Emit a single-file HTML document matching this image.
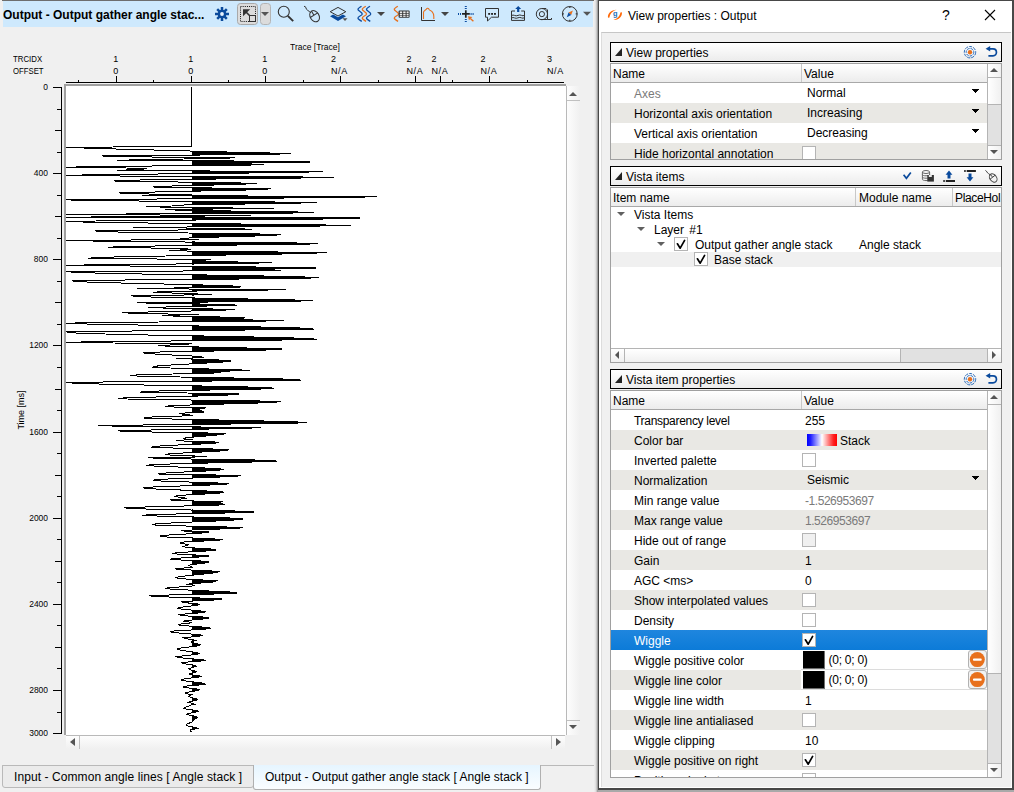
<!DOCTYPE html>
<html><head><meta charset="utf-8"><title>View</title>
<style>
html,body{margin:0;padding:0}
body{width:1014px;height:792px;overflow:hidden;background:#f0f0f0;position:relative;font-family:"Liberation Sans",sans-serif;font-size:12px;color:#000}
.a{position:absolute}
.t{position:absolute;white-space:pre;line-height:14px;height:14px}
.ax{position:absolute;white-space:pre;font-size:9px;line-height:10px;height:10px;color:#000}
.axc{position:absolute;white-space:pre;font-size:9px;line-height:10px;height:10px;width:40px;margin-left:-20px;text-align:center}
.axr{position:absolute;white-space:pre;font-size:9px;line-height:10px;height:10px;width:40px;text-align:right}
.k{position:absolute;background:#000}
/* right panel */
.hdr{position:absolute;left:610px;width:390px;height:18px;border:1px solid #000;background:linear-gradient(#ffffff,#ececec)}
.tbl{position:absolute;left:610px;width:390px;border:1px solid #a0a0a0;background:#fff;overflow:hidden}
.row{position:absolute;left:0;width:376px;height:20px}
.row.g{background:#e9e8e4}
.row.sel{background:linear-gradient(#1f86de,#0c7bd8);color:#fff}
.row .n{position:absolute;left:23px;top:4px;white-space:pre;line-height:14px}
.row .v{position:absolute;left:194px;top:4px;white-space:pre;line-height:14px}
.row .vd{position:absolute;left:196px;top:3px;white-space:pre;line-height:14px}
.gray{color:#7a7a7a}
.v.gray{letter-spacing:-.45px}
.cb{position:absolute;left:191px;top:3px;width:12px;height:12px;border:1px solid #b4b4b4;background:#fff}
.cb.dis{background:#f0f0f0}
.dd{position:absolute;left:361px;top:6px;width:7px;height:4px}
.sb{position:absolute;background:linear-gradient(90deg,#ffffff,#f0f0f0)}
</style></head>
<body>
<div class="a" style="left:2px;top:0;width:596px;height:1px;background:#6e6e6e"></div>
<div class="a" style="left:3px;top:1px;width:590px;height:26px;background:#cee9fd"></div>
<div class="t" style="left:3px;top:8px;font-weight:bold;font-size:12px">Output - Output gather angle stac...</div>
<svg class="a" style="left:0;top:0" width="600" height="30" viewBox="0 0 600 30">
<!-- gear -->
<g transform="translate(222,14)" fill="#0a4a9c">
<g><rect x="-1.25" y="-7" width="2.5" height="14"/><rect x="-7" y="-1.25" width="14" height="2.5"/></g>
<g transform="rotate(45)"><rect x="-1.25" y="-6.8" width="2.5" height="13.6"/><rect x="-6.8" y="-1.25" width="13.6" height="2.5"/></g>
<circle r="4.3"/><circle r="1.9" fill="#e9f4ff"/>
</g>
<!-- select button -->
<rect x="237.5" y="3.5" width="20" height="21" rx="3" fill="#dcdcdc" stroke="#a9a9a9"/>
<rect x="260.5" y="3.5" width="10" height="21" rx="3" fill="#dcdcdc" stroke="#b4b4b4"/>
<rect x="240.5" y="6.5" width="15" height="15" fill="none" stroke="#111" stroke-width="1" stroke-dasharray="1 1.15"/>
<rect x="249.5" y="15.5" width="6" height="6" fill="#dcdcdc" stroke="#333"/>
<path d="M243,9.2 L250.2,9.2 L243,16.2 Z" fill="#333"/>
<path d="M245.5,11.5 L250,16" stroke="#333" stroke-width="1.6" fill="none"/>
<path d="M261,12 L269,12 L265,16 Z" fill="#555"/>
<!-- magnifier -->
<circle cx="283.8" cy="11.8" r="5.5" fill="none" stroke="#333" stroke-width="1.1"/>
<path d="M287.8,15.9 L293.2,21.1" stroke="#333" stroke-width="2" fill="none"/>
<!-- mouse -->
<path d="M304,6.3 C306.5,6 305.5,9.5 307.5,10.2 C309,10.8 309.5,12 311,13" fill="none" stroke="#333" stroke-width="1"/>
<g transform="translate(314.6,16.2) rotate(-32)"><ellipse rx="4.4" ry="6" fill="none" stroke="#333" stroke-width="1"/><path d="M-4.4,-1.2 L4.4,-1.2 M0,-6 L0,-1.2" stroke="#333" stroke-width="1" fill="none"/></g>
<!-- layers -->
<path d="M330.2,11.7 L338,7.4 L345.8,11.7 L338,16 Z" fill="none" stroke="#333" stroke-width="1"/>
<path d="M330,16.2 L333.2,14.6 L338,17.3 L342.8,14.6 L346,16.2 L338,21 Z" fill="#0a4a9c"/>
<path d="M342.5,18.2 L347.5,18.2 L345,21 Z" fill="#555"/>
<!-- 3 waves -->
<g fill="none" stroke-width="1.3">
<path d="M361.5,6.2 C357,9 357,9.5 360,11.5 C363,13.5 363,14.5 360,16 C357,17.8 357,18.5 361.8,21.4" stroke="#0c4da2"/>
<path d="M365.8,6.2 C361.3,9 361.3,9.5 364.3,11.5 C367.3,13.5 367.3,14.5 364.3,16 C361.3,17.8 361.3,18.5 366.1,21.4" stroke="#e8701c"/>
<path d="M370,6.2 C365.5,9 365.5,9.5 368.5,11.5 C371.5,13.5 371.5,14.5 368.5,16 C365.5,17.8 365.5,18.5 370.3,21.4" stroke="#0c4da2"/>
</g>
<path d="M377,12 L385,12 L381,16 Z" fill="#444"/>
<!-- wave + table -->
<path d="M397.8,6.2 C393.3,9 393.3,9.5 396.3,11.5 C399.3,13.5 399.3,14.5 396.3,16 C393.3,17.8 393.3,18.5 398.1,21.4" stroke="#e8701c" stroke-width="1.3" fill="none"/>
<rect x="398.6" y="10.4" width="11" height="7.4" rx="1" fill="#333"/>
<g fill="#fff"><rect x="399.8" y="11.5" width="2.4" height="1.4"/><rect x="403.2" y="11.5" width="2.4" height="1.4"/><rect x="406.6" y="11.5" width="2" height="1.4"/>
<rect x="399.8" y="13.7" width="2.4" height="1.2"/><rect x="403.2" y="13.7" width="2.4" height="1.2"/><rect x="406.6" y="13.7" width="2" height="1.2"/>
<rect x="399.8" y="15.6" width="2.4" height="1.2"/><rect x="403.2" y="15.6" width="2.4" height="1.2"/><rect x="406.6" y="15.6" width="2" height="1.2"/></g>
<!-- histogram -->
<path d="M421.5,7 L421.5,20.5 L435,20.5" fill="none" stroke="#333" stroke-width="1"/>
<path d="M423.5,18.9 L423.5,12.2 C423.6,10.6 425.6,10.2 426.3,9.1 C427,7.9 428.7,7.8 429.1,9.6 C429.4,10.4 431.2,10.6 432.2,11.8 C433.4,13.2 433.8,14.4 433.8,16.2 L433.8,18.9" fill="none" stroke="#e8701c" stroke-width="1.1"/>
<path d="M441,12 L449,12 L445,16 Z" fill="#444"/>
<!-- crosshair -->
<path d="M465.8,6 L465.8,10 M465.8,19 L465.8,22 M458,13.9 L462,13.9 M470.6,13.9 L474,13.9" stroke="#0c4da2" stroke-width="2" stroke-dasharray="1 1" fill="none"/>
<path d="M462,13.9 L469.8,13.9 M465.8,10.2 L465.8,17.7" stroke="#222" stroke-width="1.7" fill="none"/>
<path d="M468,16.2 L472.3,16.9 L468.9,20.3 Z" fill="#e8701c"/>
<path d="M470.4,18.4 L473.4,21.2" stroke="#e8701c" stroke-width="1.4" fill="none"/>
<!-- speech bubble -->
<path d="M485.5,8.5 L498.5,8.5 L498.5,17.2 L491.5,17.2 L487.5,21 L487.5,17.2 L485.5,17.2 Z" fill="none" stroke="#333" stroke-width="1"/>
<rect x="488.2" y="13" width="1.9" height="1.8" fill="#222"/><rect x="491.1" y="13" width="1.9" height="1.8" fill="#222"/><rect x="494" y="13" width="1.9" height="1.8" fill="#222"/>
<!-- export -->
<path d="M515,11 L511.5,11 L511.5,20.4 L524.5,20.4 L524.5,11 L521.2,11" fill="none" stroke="#333" stroke-width="1"/>
<path d="M511.5,15.6 C513.5,13.8 515.5,17 518,15.4 C520.5,13.8 522.5,17 524.5,15.2 M511.5,18 C513.5,16.4 515.5,19.4 518,17.8 C520.5,16.4 522.5,19.4 524.5,17.6" fill="none" stroke="#333" stroke-width="1"/>
<path d="M518.2,6 L521.2,9 L519.3,9 L519.3,12 L517.1,12 L517.1,9 L515.2,9 Z" fill="#0a4a9c"/>
<!-- tape -->
<circle cx="541.9" cy="14.1" r="5.6" fill="none" stroke="#333" stroke-width="1"/>
<circle cx="541.9" cy="14.1" r="2.6" fill="none" stroke="#333" stroke-width="1"/>
<path d="M542,8.5 L546,8.5 L547.5,10 L547.5,19.5 L541,19.5 M547.5,19.5 L551.5,19.5 L551.5,18" fill="none" stroke="#333" stroke-width="1"/>
<!-- compass -->
<circle cx="569.8" cy="13.9" r="7.4" fill="none" stroke="#333" stroke-width="1"/>
<path d="M569.8,6.5 L569.8,8 M569.8,19.8 L569.8,21.3 M562.4,13.9 L563.9,13.9 M575.7,13.9 L577.2,13.9" stroke="#333" stroke-width="1.2" fill="none"/>
<path d="M572.9,10.6 L571.2,15.1 L568.5,12.6 Z" fill="#e8701c"/>
<path d="M566.8,17.2 L571.2,15.1 L568.5,12.6 Z" fill="#0c4da2"/>
<path d="M583,11.8 L591,11.8 L587,15.8 Z" fill="#555"/>
</svg>

<div class="ax" style="left:290px;top:42px;transform:scaleX(.945);transform-origin:0 0">Trace [Trace]</div>
<div class="ax" style="left:13px;top:54px;transform:scaleX(.87);transform-origin:0 0">TRCIDX</div>
<div class="ax" style="left:13px;top:66px;transform:scaleX(.86);transform-origin:0 0">OFFSET</div>
<div class="axc" style="left:115.7px;top:54px">1</div><div class="axc" style="left:115.7px;top:66px">0</div>
<div class="axc" style="left:190.7px;top:54px">1</div><div class="axc" style="left:190.7px;top:66px">0</div>
<div class="axc" style="left:264.7px;top:54px">1</div><div class="axc" style="left:264.7px;top:66px">0</div>
<div class="ax" style="left:331px;top:54px">2</div><div class="ax" style="left:331px;top:66px;letter-spacing:.6px">N/A</div>
<div class="ax" style="left:406.5px;top:54px">2</div><div class="ax" style="left:406.5px;top:66px;letter-spacing:.6px">N/A</div>
<div class="ax" style="left:431.5px;top:54px">2</div><div class="ax" style="left:431.5px;top:66px;letter-spacing:.6px">N/A</div>
<div class="ax" style="left:480.5px;top:54px">2</div><div class="ax" style="left:480.5px;top:66px;letter-spacing:.6px">N/A</div>
<div class="ax" style="left:547px;top:54px">3</div><div class="ax" style="left:547px;top:66px;letter-spacing:.6px">N/A</div>
<div class="k" style="left:66px;top:82px;width:498px;height:1px"></div>
<div class="k" style="left:116px;top:76px;width:1px;height:6px"></div>
<div class="k" style="left:191px;top:76px;width:1px;height:6px"></div>
<div class="k" style="left:265px;top:76px;width:1px;height:6px"></div>
<div class="k" style="left:340px;top:76px;width:1px;height:6px"></div>
<div class="k" style="left:415px;top:76px;width:1px;height:6px"></div>
<div class="k" style="left:440px;top:76px;width:1px;height:6px"></div>
<div class="k" style="left:489px;top:76px;width:1px;height:6px"></div>
<div class="k" style="left:78px;top:80px;width:1px;height:2px"></div>
<div class="k" style="left:153px;top:80px;width:1px;height:2px"></div>
<div class="k" style="left:228px;top:80px;width:1px;height:2px"></div>
<div class="k" style="left:303px;top:80px;width:1px;height:2px"></div>
<div class="k" style="left:378px;top:80px;width:1px;height:2px"></div>
<div class="k" style="left:452px;top:80px;width:1px;height:2px"></div>
<div class="k" style="left:527px;top:80px;width:1px;height:2px"></div>
<div class="k" style="left:61px;top:87px;width:1px;height:647px"></div>
<div class="k" style="left:53px;top:87px;width:8px;height:1px"></div>
<div class="axr" style="left:8px;top:82px;transform:scaleX(.94);transform-origin:100% 0">0</div>
<div class="k" style="left:57px;top:109px;width:4px;height:1px"></div>
<div class="k" style="left:55px;top:130px;width:6px;height:1px"></div>
<div class="k" style="left:57px;top:152px;width:4px;height:1px"></div>
<div class="k" style="left:53px;top:173px;width:8px;height:1px"></div>
<div class="axr" style="left:8px;top:168px;transform:scaleX(.94);transform-origin:100% 0">400</div>
<div class="k" style="left:57px;top:195px;width:4px;height:1px"></div>
<div class="k" style="left:55px;top:216px;width:6px;height:1px"></div>
<div class="k" style="left:57px;top:238px;width:4px;height:1px"></div>
<div class="k" style="left:53px;top:259px;width:8px;height:1px"></div>
<div class="axr" style="left:8px;top:254px;transform:scaleX(.94);transform-origin:100% 0">800</div>
<div class="k" style="left:57px;top:281px;width:4px;height:1px"></div>
<div class="k" style="left:55px;top:302px;width:6px;height:1px"></div>
<div class="k" style="left:57px;top:324px;width:4px;height:1px"></div>
<div class="k" style="left:53px;top:345px;width:8px;height:1px"></div>
<div class="axr" style="left:8px;top:340px;transform:scaleX(.94);transform-origin:100% 0">1200</div>
<div class="k" style="left:57px;top:367px;width:4px;height:1px"></div>
<div class="k" style="left:55px;top:389px;width:6px;height:1px"></div>
<div class="k" style="left:57px;top:410px;width:4px;height:1px"></div>
<div class="k" style="left:53px;top:432px;width:8px;height:1px"></div>
<div class="axr" style="left:8px;top:427px;transform:scaleX(.94);transform-origin:100% 0">1600</div>
<div class="k" style="left:57px;top:453px;width:4px;height:1px"></div>
<div class="k" style="left:55px;top:475px;width:6px;height:1px"></div>
<div class="k" style="left:57px;top:496px;width:4px;height:1px"></div>
<div class="k" style="left:53px;top:518px;width:8px;height:1px"></div>
<div class="axr" style="left:8px;top:513px;transform:scaleX(.94);transform-origin:100% 0">2000</div>
<div class="k" style="left:57px;top:539px;width:4px;height:1px"></div>
<div class="k" style="left:55px;top:561px;width:6px;height:1px"></div>
<div class="k" style="left:57px;top:582px;width:4px;height:1px"></div>
<div class="k" style="left:53px;top:604px;width:8px;height:1px"></div>
<div class="axr" style="left:8px;top:599px;transform:scaleX(.94);transform-origin:100% 0">2400</div>
<div class="k" style="left:57px;top:625px;width:4px;height:1px"></div>
<div class="k" style="left:55px;top:647px;width:6px;height:1px"></div>
<div class="k" style="left:57px;top:668px;width:4px;height:1px"></div>
<div class="k" style="left:53px;top:690px;width:8px;height:1px"></div>
<div class="axr" style="left:8px;top:685px;transform:scaleX(.94);transform-origin:100% 0">2800</div>
<div class="k" style="left:57px;top:712px;width:4px;height:1px"></div>
<div class="k" style="left:53px;top:733px;width:8px;height:1px"></div>
<div class="axr" style="left:8px;top:728px;transform:scaleX(.94);transform-origin:100% 0">3000</div>
<div class="ax" style="left:1px;top:405px;width:40px;text-align:center;transform:rotate(-90deg);transform-origin:50% 50%">Time [ms]</div>
<div class="a" style="left:64px;top:84px;width:502px;height:651px;background:#a0a0a0"></div>
<div class="a" style="left:66px;top:86px;width:500px;height:649px;background:#fff"></div>
<svg class="a" style="left:0;top:0" width="600" height="792" viewBox="0 0 600 792"><g shape-rendering="crispEdges"><path d="M191.5,87.0 L191.5,87.9 L191.5,88.7 L191.5,89.6 L191.5,90.4 L191.5,91.3 L191.5,92.2 L191.5,93.0 L191.5,93.9 L191.5,94.8 L191.5,95.6 L191.5,96.5 L191.5,97.3 L191.5,98.2 L191.5,99.1 L191.5,99.9 L191.5,100.8 L191.5,101.7 L191.5,102.5 L191.5,103.4 L191.5,104.2 L191.5,105.1 L191.5,106.0 L191.5,106.8 L191.5,107.7 L191.5,108.5 L191.5,109.4 L191.5,110.3 L191.5,111.1 L191.5,112.0 L191.5,112.9 L191.5,113.7 L191.5,114.6 L191.5,115.4 L191.5,116.3 L191.5,117.2 L191.5,118.0 L191.5,118.9 L191.5,119.8 L191.5,120.6 L191.5,121.5 L191.5,122.3 L191.5,123.2 L191.5,124.1 L191.5,124.9 L191.5,125.8 L191.5,126.7 L191.5,127.5 L191.5,128.4 L191.5,129.2 L191.5,130.1 L191.5,131.0 L191.5,131.8 L191.5,132.7 L191.5,133.5 L191.5,134.4 L191.5,135.3 L191.5,136.1 L191.5,137.0 L191.5,137.9 L191.5,138.7 L191.5,139.6 L191.5,140.4 L191.5,141.3 L191.5,142.2 L191.5,143.0 L191.5,143.9 L191.5,144.8 L191.5,145.6 L191.5,146.5 L191.5,147.3 L191.5,148.2 L191.5,149.1 L191.5,149.9 L191.5,150.8 L212.8,151.6 L244.0,152.5 L290.5,153.4 L276.7,154.2 L191.5,155.1 L191.5,156.0 L191.5,156.8 L234.5,157.7 L222.0,158.5 L191.5,159.4 L191.5,160.3 L249.9,161.1 L310.5,162.0 L254.6,162.9 L232.5,163.7 L263.5,164.6 L238.3,165.4 L191.5,166.3 L191.5,167.2 L191.5,168.0 L191.5,168.9 L191.5,169.8 L191.5,170.6 L322.5,171.5 L301.6,172.3 L234.1,173.2 L191.5,174.1 L191.5,174.9 L191.5,175.8 L278.0,176.6 L333.5,177.5 L275.6,178.4 L197.9,179.2 L191.5,180.1 L191.5,181.0 L191.5,181.8 L231.4,182.7 L256.5,183.5 L237.9,184.4 L201.9,185.3 L191.5,186.1 L191.5,187.0 L202.8,187.9 L270.5,188.7 L262.2,189.6 L230.9,190.4 L191.5,191.3 L191.5,192.2 L191.5,193.0 L191.5,193.9 L191.5,194.7 L191.5,195.6 L376.5,196.5 L357.9,197.3 L264.2,198.2 L191.5,199.1 L191.5,199.9 L191.5,200.8 L240.7,201.6 L316.5,202.5 L289.8,203.4 L230.9,204.2 L191.5,205.1 L191.5,206.0 L191.5,206.8 L207.2,207.7 L273.5,208.5 L191.5,209.4 L191.5,210.3 L237.7,211.1 L297.9,212.0 L313.5,212.9 L191.5,213.7 L191.5,214.6 L250.5,215.4 L191.5,216.3 L191.5,217.2 L360.5,218.0 L336.8,218.9 L235.4,219.7 L191.5,220.6 L191.5,221.5 L191.5,222.3 L191.5,223.2 L250.2,224.1 L322.1,224.9 L350.5,225.8 L232.1,226.6 L191.5,227.5 L225.7,228.4 L251.5,229.2 L191.5,230.1 L191.5,231.0 L191.5,231.8 L191.5,232.7 L232.3,233.5 L280.5,234.4 L275.7,235.3 L252.3,236.1 L219.3,237.0 L191.5,237.8 L191.5,238.7 L198.5,239.6 L191.5,240.4 L191.5,241.3 L206.0,242.2 L296.6,243.0 L317.5,243.9 L264.2,244.7 L191.5,245.6 L191.5,246.5 L191.5,247.3 L191.5,248.2 L191.5,249.1 L191.5,249.9 L191.5,250.8 L237.8,251.6 L326.5,252.5 L310.6,253.4 L272.8,254.2 L221.0,255.1 L191.5,256.0 L191.5,256.8 L191.5,257.7 L191.5,258.5 L210.5,259.4 L204.5,260.3 L200.5,261.1 L238.1,262.0 L271.5,262.8 L214.9,263.7 L191.5,264.6 L191.5,265.4 L191.5,266.3 L280.7,267.2 L316.5,268.0 L260.5,268.9 L271.5,269.7 L280.5,270.6 L191.5,271.5 L191.5,272.3 L191.5,273.2 L191.5,274.1 L200.3,274.9 L252.9,275.8 L294.3,276.6 L319.2,277.5 L304.9,278.4 L218.0,279.2 L191.5,280.1 L191.5,280.9 L191.5,281.8 L191.5,282.7 L191.5,283.5 L191.5,284.4 L214.2,285.3 L235.6,286.1 L241.1,287.0 L191.5,287.8 L191.5,288.7 L286.1,289.6 L250.0,290.4 L191.5,291.3 L191.5,292.2 L191.5,293.0 L195.9,293.9 L212.1,294.7 L191.5,295.6 L191.5,296.5 L191.5,297.3 L204.4,298.2 L253.1,299.1 L292.9,299.9 L313.3,300.8 L264.1,301.6 L191.5,302.5 L191.5,303.4 L213.7,304.2 L237.2,305.1 L211.4,305.9 L191.5,306.8 L191.5,307.7 L191.5,308.5 L234.8,309.4 L221.2,310.3 L191.5,311.1 L191.5,312.0 L191.5,312.8 L191.5,313.7 L199.3,314.6 L191.5,315.4 L191.5,316.3 L230.4,317.2 L244.7,318.0 L225.5,318.9 L235.8,319.7 L284.1,320.6 L244.1,321.5 L191.5,322.3 L191.5,323.2 L191.5,324.1 L191.5,324.9 L191.5,325.8 L240.6,326.6 L285.5,327.5 L310.7,328.4 L314.1,329.2 L236.7,330.1 L191.5,330.9 L191.5,331.8 L191.5,332.7 L191.5,333.5 L191.5,334.4 L191.5,335.3 L209.2,336.1 L253.6,337.0 L289.4,337.8 L311.6,338.7 L317.3,339.6 L247.3,340.4 L191.5,341.3 L191.5,342.2 L191.5,343.0 L191.5,343.9 L191.5,344.7 L191.5,345.6 L191.5,346.5 L213.4,347.3 L256.4,348.2 L282.1,349.0 L271.3,349.9 L227.1,350.8 L191.5,351.6 L191.5,352.5 L191.5,353.4 L191.5,354.2 L191.5,355.1 L191.5,355.9 L201.8,356.8 L204.2,357.7 L191.5,358.5 L201.9,359.4 L227.1,360.3 L231.3,361.1 L223.5,362.0 L210.8,362.8 L194.6,363.7 L191.5,364.6 L191.5,365.4 L191.5,366.3 L191.5,367.2 L191.5,368.0 L204.3,368.9 L236.9,369.7 L250.2,370.6 L205.5,371.5 L221.0,372.3 L211.5,373.2 L191.5,374.0 L191.5,374.9 L191.5,375.8 L191.5,376.6 L206.2,377.5 L256.1,378.4 L291.8,379.2 L301.3,380.1 L225.1,380.9 L191.5,381.8 L191.5,382.7 L191.5,383.5 L191.5,384.4 L191.5,385.3 L207.6,386.1 L247.8,387.0 L270.9,387.8 L274.3,388.7 L235.6,389.6 L191.5,390.4 L191.5,391.3 L191.5,392.1 L191.5,393.0 L239.1,393.9 L236.1,394.7 L213.9,395.6 L191.5,396.5 L191.5,397.3 L191.5,398.2 L191.5,399.0 L191.5,399.9 L252.1,400.8 L281.2,401.6 L271.9,402.5 L248.1,403.4 L216.8,404.2 L191.5,405.1 L191.5,405.9 L191.5,406.8 L205.6,407.7 L203.8,408.5 L196.5,409.4 L197.4,410.3 L202.2,411.1 L204.2,412.0 L191.5,412.8 L191.5,413.7 L191.5,414.6 L192.5,415.4 L191.5,416.3 L191.5,417.1 L191.5,418.0 L191.5,418.9 L204.5,419.7 L247.3,420.6 L284.0,421.5 L306.8,422.3 L296.1,423.2 L232.5,424.0 L191.5,424.9 L191.5,425.8 L191.5,426.6 L261.0,427.5 L245.3,428.4 L198.0,429.2 L191.5,430.1 L191.5,430.9 L191.5,431.8 L196.5,432.7 L225.9,433.5 L222.9,434.4 L215.1,435.2 L204.4,436.1 L193.8,437.0 L191.5,437.8 L191.5,438.7 L192.5,439.6 L191.5,440.4 L191.5,441.3 L219.0,442.1 L216.1,443.0 L203.3,443.9 L191.5,444.7 L191.5,445.6 L191.5,446.5 L191.5,447.3 L191.5,448.2 L213.1,449.0 L228.9,449.9 L223.8,450.8 L210.0,451.6 L192.2,452.5 L191.5,453.4 L191.5,454.2 L191.5,455.1 L193.2,455.9 L207.2,456.8 L191.5,457.7 L191.5,458.5 L215.1,459.4 L268.0,460.2 L276.8,461.1 L252.7,462.0 L216.6,462.8 L191.5,463.7 L191.5,464.6 L191.5,465.4 L191.5,466.3 L191.5,467.1 L204.5,468.0 L220.9,468.9 L224.0,469.7 L213.6,470.6 L196.4,471.5 L191.5,472.3 L191.5,473.2 L191.5,474.0 L212.3,474.9 L241.1,475.8 L229.7,476.6 L208.7,477.5 L191.5,478.3 L191.5,479.2 L191.5,480.1 L191.5,480.9 L191.5,481.8 L210.6,482.7 L228.9,483.5 L224.7,484.4 L205.2,485.2 L191.5,486.1 L191.5,487.0 L191.5,487.8 L191.5,488.7 L191.5,489.6 L192.5,490.4 L213.7,491.3 L224.0,492.1 L220.3,493.0 L207.4,493.9 L191.5,494.7 L191.5,495.6 L191.5,496.5 L191.5,497.3 L191.5,498.2 L191.5,499.0 L191.5,499.9 L191.5,500.8 L223.0,501.6 L217.7,502.5 L215.5,503.3 L224.9,504.2 L218.4,505.1 L191.5,505.9 L191.5,506.8 L191.5,507.7 L191.5,508.5 L191.5,509.4 L201.3,510.2 L238.6,511.1 L254.1,512.0 L235.4,512.8 L191.5,513.7 L191.5,514.6 L191.5,515.4 L191.5,516.3 L198.2,517.1 L229.7,518.0 L243.1,518.9 L238.7,519.7 L225.5,520.6 L206.4,521.4 L191.5,522.3 L191.5,523.2 L191.5,524.0 L191.5,524.9 L191.5,525.8 L214.1,526.6 L242.7,527.5 L237.8,528.3 L214.7,529.2 L191.5,530.1 L191.5,530.9 L209.3,531.8 L206.4,532.7 L195.0,533.5 L191.5,534.4 L191.5,535.2 L191.5,536.1 L191.5,537.0 L191.5,537.8 L210.7,538.7 L222.8,539.6 L216.7,540.4 L198.4,541.3 L191.5,542.1 L191.5,543.0 L191.5,543.9 L191.5,544.7 L191.5,545.6 L191.5,546.4 L191.5,547.3 L197.5,548.2 L211.3,549.0 L216.4,549.9 L209.4,550.8 L194.7,551.6 L191.5,552.5 L191.5,553.3 L191.5,554.2 L197.8,555.1 L209.3,555.9 L202.9,556.8 L191.5,557.7 L191.5,558.5 L191.5,559.4 L191.5,560.2 L202.3,561.1 L209.3,562.0 L206.3,562.8 L199.6,563.7 L192.5,564.5 L191.5,565.4 L191.5,566.3 L192.5,567.1 L191.5,568.0 L191.5,568.9 L191.5,569.7 L205.8,570.6 L218.9,571.4 L217.2,572.3 L212.1,573.2 L204.3,574.0 L195.3,574.9 L191.5,575.8 L191.5,576.6 L191.5,577.5 L191.5,578.3 L191.5,579.2 L204.5,580.1 L216.4,580.9 L214.8,581.8 L205.3,582.7 L193.1,583.5 L191.5,584.4 L195.4,585.2 L191.5,586.1 L191.5,587.0 L191.5,587.8 L191.5,588.7 L191.5,589.5 L195.8,590.4 L215.9,591.3 L231.3,592.1 L237.1,593.0 L219.4,593.9 L191.5,594.7 L191.5,595.6 L191.5,596.4 L191.5,597.3 L205.9,598.2 L222.3,599.0 L216.0,599.9 L196.9,600.8 L191.5,601.6 L191.5,602.5 L191.6,603.3 L199.1,604.2 L197.9,605.1 L192.2,605.9 L191.5,606.8 L191.5,607.6 L191.5,608.5 L191.5,609.4 L193.1,610.2 L201.8,611.1 L205.5,612.0 L200.5,612.8 L191.5,613.7 L191.5,614.5 L191.5,615.4 L191.8,616.3 L204.6,617.1 L209.3,618.0 L204.5,618.9 L194.8,619.7 L191.5,620.6 L191.5,621.4 L192.0,622.3 L191.5,623.2 L191.5,624.0 L191.5,624.9 L191.5,625.8 L197.2,626.6 L207.4,627.5 L211.3,628.3 L204.5,629.2 L191.5,630.1 L191.5,630.9 L191.5,631.8 L191.5,632.6 L191.5,633.5 L195.8,634.4 L202.4,635.2 L200.1,636.1 L191.5,637.0 L191.5,637.8 L191.5,638.7 L191.5,639.5 L195.4,640.4 L192.9,641.3 L191.5,642.1 L193.8,643.0 L197.3,643.9 L200.1,644.7 L199.3,645.6 L194.0,646.4 L191.5,647.3 L191.5,648.2 L191.5,649.0 L191.5,649.9 L191.5,650.7 L191.5,651.6 L196.4,652.5 L199.1,653.3 L197.2,654.2 L191.5,655.1 L191.5,655.9 L191.5,656.8 L191.5,657.6 L191.5,658.5 L199.6,659.4 L205.5,660.2 L200.0,661.1 L191.5,662.0 L191.5,662.8 L191.5,663.7 L191.5,664.5 L194.8,665.4 L195.7,666.3 L193.5,667.1 L191.5,668.0 L191.5,668.8 L191.5,669.7 L193.1,670.6 L196.4,671.4 L195.7,672.3 L192.1,673.2 L191.5,674.0 L191.5,674.9 L199.6,675.7 L201.3,676.6 L195.8,677.5 L191.5,678.3 L191.5,679.2 L191.5,680.1 L191.5,680.9 L192.0,681.8 L199.2,682.6 L204.3,683.5 L205.4,684.4 L196.4,685.2 L191.5,686.1 L191.5,687.0 L191.5,687.8 L195.1,688.7 L199.5,689.5 L198.1,690.4 L193.4,691.3 L191.5,692.1 L191.5,693.0 L191.5,693.8 L191.5,694.7 L191.5,695.6 L191.5,696.4 L191.5,697.3 L193.8,698.2 L196.7,699.0 L197.5,699.9 L194.5,700.7 L191.5,701.6 L191.5,702.5 L192.7,703.3 L194.8,704.2 L191.5,705.1 L191.5,705.9 L191.5,706.8 L191.5,707.6 L191.5,708.5 L191.5,709.4 L195.0,710.2 L198.6,711.1 L196.8,711.9 L191.9,712.8 L191.5,713.7 L191.5,714.5 L191.5,715.4 L195.4,716.3 L197.5,717.1 L197.0,718.0 L195.6,718.8 L194.1,719.7 L193.0,720.6 L192.8,721.4 L191.5,722.3 L191.5,723.2 L191.5,724.0 L191.5,724.9 L191.5,725.7 L191.5,726.6 L194.9,727.5 L197.5,728.3 L194.2,729.2 L191.5,730.1 L191.5,730.9 L191.5,731.8 Z" fill="#000" stroke="none"/><path d="M191.5,87.0 L191.5,87.9 L191.5,88.7 L191.5,89.6 L191.5,90.4 L191.5,91.3 L191.5,92.2 L191.5,93.0 L191.5,93.9 L191.5,94.8 L191.5,95.6 L191.5,96.5 L191.5,97.3 L191.5,98.2 L191.5,99.1 L191.5,99.9 L191.5,100.8 L191.5,101.7 L191.5,102.5 L191.5,103.4 L191.5,104.2 L191.5,105.1 L191.5,106.0 L191.5,106.8 L191.5,107.7 L191.5,108.5 L191.5,109.4 L191.5,110.3 L191.5,111.1 L191.5,112.0 L191.5,112.9 L191.5,113.7 L191.5,114.6 L191.5,115.4 L191.5,116.3 L191.5,117.2 L191.5,118.0 L191.5,118.9 L191.5,119.8 L191.5,120.6 L191.5,121.5 L191.5,122.3 L191.5,123.2 L191.5,124.1 L191.5,124.9 L191.5,125.8 L191.5,126.7 L191.5,127.5 L191.5,128.4 L191.5,129.2 L191.5,130.1 L191.5,131.0 L191.5,131.8 L191.5,132.7 L191.5,133.5 L191.5,134.4 L191.5,135.3 L191.5,136.1 L191.5,137.0 L191.5,137.9 L191.5,138.7 L191.5,139.6 L191.5,140.4 L191.5,141.3 L191.5,142.2 L191.5,143.0 L191.5,143.9 L191.5,144.8 L191.5,145.6 L191.5,146.5 L66.5,147.3 L88.2,148.2 L119.4,149.1 L150.5,149.9 L181.7,150.8 L212.8,151.6 L244.0,152.5 L290.5,153.4 L276.7,154.2 L190.8,155.1 L102.5,156.0 L128.0,156.8 L234.5,157.7 L222.0,158.5 L154.0,159.4 L117.5,160.3 L249.9,161.1 L310.5,162.0 L254.6,162.9 L232.5,163.7 L263.5,164.6 L238.3,165.4 L110.6,166.3 L66.5,167.2 L126.2,168.0 L146.5,168.9 L128.6,169.8 L117.5,170.6 L322.5,171.5 L301.6,172.3 L234.1,173.2 L149.1,174.1 L84.1,174.9 L66.5,175.8 L278.0,176.6 L333.5,177.5 L275.6,178.4 L197.9,179.2 L133.5,180.1 L114.5,181.0 L161.9,181.8 L231.4,182.7 L256.5,183.5 L237.9,184.4 L201.9,185.3 L167.6,186.1 L153.5,187.0 L202.8,187.9 L270.5,188.7 L262.2,189.6 L230.9,190.4 L187.0,191.3 L145.9,192.2 L119.5,193.0 L141.8,193.9 L191.5,194.7 L142.5,195.6 L376.5,196.5 L357.9,197.3 L264.2,198.2 L144.8,199.1 L66.5,199.9 L104.2,200.8 L240.7,201.6 L316.5,202.5 L289.8,203.4 L230.9,204.2 L178.5,205.1 L171.7,206.0 L146.5,206.8 L207.2,207.7 L273.5,208.5 L165.5,209.4 L179.0,210.3 L237.7,211.1 L297.9,212.0 L313.5,212.9 L156.9,213.7 L66.5,214.6 L250.5,215.4 L182.3,216.3 L66.5,217.2 L360.5,218.0 L336.8,218.9 L235.4,219.7 L119.1,220.6 L66.5,221.5 L92.1,222.3 L162.3,223.2 L250.2,224.1 L322.1,224.9 L350.5,225.8 L232.1,226.6 L132.5,227.5 L225.7,228.4 L251.5,229.2 L169.4,230.1 L95.5,231.0 L105.8,231.8 L160.9,232.7 L232.3,233.5 L280.5,234.4 L275.7,235.3 L252.3,236.1 L219.3,237.0 L191.2,237.8 L180.5,238.7 L198.5,239.6 L66.5,240.4 L105.4,241.3 L206.0,242.2 L296.6,243.0 L317.5,243.9 L264.2,244.7 L183.7,245.6 L120.8,246.5 L108.5,247.3 L161.8,248.2 L190.5,249.1 L181.3,249.9 L169.5,250.8 L237.8,251.6 L326.5,252.5 L310.6,253.4 L272.8,254.2 L221.0,255.1 L166.3,256.0 L120.5,256.8 L93.3,257.7 L88.5,258.5 L210.5,259.4 L204.5,260.3 L200.5,261.1 L238.1,262.0 L271.5,262.8 L214.9,263.7 L102.0,264.6 L66.5,265.4 L161.0,266.3 L280.7,267.2 L316.5,268.0 L260.5,268.9 L271.5,269.7 L280.5,270.6 L66.5,271.5 L72.9,272.3 L100.9,273.2 L146.2,274.1 L200.3,274.9 L252.9,275.8 L294.3,276.6 L319.2,277.5 L304.9,278.4 L218.0,279.2 L114.0,280.1 L71.9,280.9 L81.7,281.8 L106.9,282.7 L142.4,283.5 L180.8,284.4 L214.2,285.3 L235.6,286.1 L241.1,287.0 L185.3,287.8 L137.0,288.7 L286.1,289.6 L250.0,290.4 L171.1,291.3 L152.9,292.2 L171.7,293.0 L195.9,293.9 L212.1,294.7 L130.8,295.6 L134.7,296.5 L160.8,297.3 L204.4,298.2 L253.1,299.1 L292.9,299.9 L313.3,300.8 L264.1,301.6 L137.0,302.5 L153.7,303.4 L213.7,304.2 L237.2,305.1 L211.4,305.9 L171.2,306.8 L147.9,307.7 L185.7,308.5 L234.8,309.4 L221.2,310.3 L186.7,311.1 L148.1,312.0 L121.8,312.8 L151.1,313.7 L199.3,314.6 L162.2,315.4 L178.8,316.3 L230.4,317.2 L244.7,318.0 L225.5,318.9 L235.8,319.7 L284.1,320.6 L244.1,321.5 L107.8,322.3 L66.5,323.2 L89.0,324.1 L131.0,324.9 L185.3,325.8 L240.6,326.6 L285.5,327.5 L310.7,328.4 L314.1,329.2 L236.7,330.1 L140.7,330.9 L66.5,331.8 L69.1,332.7 L87.1,333.5 L119.7,334.4 L162.4,335.3 L209.2,336.1 L253.6,337.0 L289.4,337.8 L311.6,338.7 L317.3,339.6 L247.3,340.4 L134.4,341.3 L66.5,342.2 L113.5,343.0 L191.5,343.9 L176.8,344.7 L158.0,345.6 L173.9,346.5 L213.4,347.3 L256.4,348.2 L282.1,349.0 L271.3,349.9 L227.1,350.8 L174.0,351.6 L142.9,352.5 L145.8,353.4 L157.4,354.2 L174.2,355.1 L190.8,355.9 L201.8,356.8 L204.2,357.7 L176.5,358.5 L201.9,359.4 L227.1,360.3 L231.3,361.1 L223.5,362.0 L210.8,362.8 L194.6,363.7 L177.9,364.6 L163.7,365.4 L154.6,366.3 L152.1,367.2 L170.0,368.0 L204.3,368.9 L236.9,369.7 L250.2,370.6 L205.5,371.5 L221.0,372.3 L211.5,373.2 L173.0,374.0 L136.5,374.9 L129.7,375.8 L159.5,376.6 L206.2,377.5 L256.1,378.4 L291.8,379.2 L301.3,380.1 L225.1,380.9 L113.4,381.8 L66.5,382.7 L79.8,383.5 L113.1,384.4 L159.1,385.3 L207.6,386.1 L247.8,387.0 L270.9,387.8 L274.3,388.7 L235.6,389.6 L184.9,390.4 L146.8,391.3 L139.8,392.1 L187.0,393.0 L239.1,393.9 L236.1,394.7 L213.9,395.6 L178.2,396.5 L142.6,397.3 L118.0,398.2 L126.7,399.0 L183.1,399.9 L252.1,400.8 L281.2,401.6 L271.9,402.5 L248.1,403.4 L216.8,404.2 L187.3,405.1 L168.4,405.9 L164.7,406.8 L205.6,407.7 L203.8,408.5 L196.5,409.4 L197.4,410.3 L202.2,411.1 L204.2,412.0 L186.3,412.8 L179.5,413.7 L187.1,414.6 L192.5,415.4 L177.6,416.3 L149.1,417.1 L143.7,418.0 L167.4,418.9 L204.5,419.7 L247.3,420.6 L284.0,421.5 L306.8,422.3 L296.1,423.2 L232.5,424.0 L149.7,424.9 L97.8,425.8 L152.4,426.6 L261.0,427.5 L245.3,428.4 L198.0,429.2 L145.8,430.1 L117.6,430.9 L138.8,431.8 L196.5,432.7 L225.9,433.5 L222.9,434.4 L215.1,435.2 L204.4,436.1 L193.8,437.0 L186.1,437.8 L183.2,438.7 L192.5,439.6 L176.5,440.4 L187.7,441.3 L219.0,442.1 L216.1,443.0 L203.3,443.9 L184.2,444.7 L165.4,445.6 L153.1,446.5 L150.8,447.3 L178.5,448.2 L213.1,449.0 L228.9,449.9 L223.8,450.8 L210.0,451.6 L192.2,452.5 L175.9,453.4 L165.5,454.2 L170.1,455.1 L193.2,455.9 L207.2,456.8 L148.4,457.7 L159.9,458.5 L215.1,459.4 L268.0,460.2 L276.8,461.1 L252.7,462.0 L216.6,462.8 L178.7,463.7 L152.2,464.6 L145.7,465.4 L157.8,466.3 L180.2,467.1 L204.5,468.0 L220.9,468.9 L224.0,469.7 L213.6,470.6 L196.4,471.5 L177.3,472.3 L162.7,473.2 L157.6,474.0 L212.3,474.9 L241.1,475.8 L229.7,476.6 L208.7,477.5 L184.1,478.3 L163.4,479.2 L152.6,480.1 L158.6,480.9 L182.1,481.8 L210.6,482.7 L228.9,483.5 L224.7,484.4 L205.2,485.2 L177.5,486.1 L153.4,487.0 L142.9,487.8 L149.2,488.7 L168.0,489.6 L192.5,490.4 L213.7,491.3 L224.0,492.1 L220.3,493.0 L207.4,493.9 L190.7,494.7 L177.7,495.6 L173.9,496.5 L180.3,497.3 L186.5,498.2 L181.5,499.0 L169.7,499.9 L184.5,500.8 L223.0,501.6 L217.7,502.5 L215.5,503.3 L224.9,504.2 L218.4,505.1 L188.7,505.9 L150.8,506.8 L124.0,507.7 L129.3,508.5 L158.6,509.4 L201.3,510.2 L238.6,511.1 L254.1,512.0 L235.4,512.8 L190.0,513.7 L150.1,514.6 L141.7,515.4 L163.8,516.3 L198.2,517.1 L229.7,518.0 L243.1,518.9 L238.7,519.7 L225.5,520.6 L206.4,521.4 L185.5,522.3 L167.2,523.2 L155.5,524.0 L152.6,524.9 L176.1,525.8 L214.1,526.6 L242.7,527.5 L237.8,528.3 L214.7,529.2 L189.4,530.1 L180.7,530.9 L209.3,531.8 L206.4,532.7 L195.0,533.5 L179.4,534.4 L165.8,535.2 L159.7,536.1 L166.8,537.0 L187.7,537.8 L210.7,538.7 L222.8,539.6 L216.7,540.4 L198.4,541.3 L182.4,542.1 L179.7,543.0 L184.9,543.9 L188.1,544.7 L186.4,545.6 L183.1,546.4 L185.4,547.3 L197.5,548.2 L211.3,549.0 L216.4,549.9 L209.4,550.8 L194.7,551.6 L179.7,552.5 L171.8,553.3 L178.7,554.2 L197.8,555.1 L209.3,555.9 L202.9,556.8 L186.4,557.7 L172.2,558.5 L169.7,559.4 L185.0,560.2 L202.3,561.1 L209.3,562.0 L206.3,562.8 L199.6,563.7 L192.5,564.5 L188.7,565.4 L190.5,566.3 L192.5,567.1 L183.7,568.0 L174.7,568.9 L183.1,569.7 L205.8,570.6 L218.9,571.4 L217.2,572.3 L212.1,573.2 L204.3,574.0 L195.3,574.9 L186.6,575.8 L179.9,576.6 L175.7,577.5 L177.4,578.3 L188.7,579.2 L204.5,580.1 L216.4,580.9 L214.8,581.8 L205.3,582.7 L193.1,583.5 L185.6,584.4 L195.4,585.2 L191.4,586.1 L179.0,587.0 L167.9,587.8 L166.0,588.7 L177.6,589.5 L195.8,590.4 L215.9,591.3 L231.3,592.1 L237.1,593.0 L219.4,593.9 L180.3,594.7 L148.8,595.6 L153.6,596.4 L177.0,597.3 L205.9,598.2 L222.3,599.0 L216.0,599.9 L196.9,600.8 L181.1,601.6 L183.2,602.5 L191.6,603.3 L199.1,604.2 L197.9,605.1 L192.2,605.9 L184.5,606.8 L178.9,607.6 L177.7,608.5 L183.7,609.4 L193.1,610.2 L201.8,611.1 L205.5,612.0 L200.5,612.8 L188.7,613.7 L178.6,614.5 L180.7,615.4 L191.8,616.3 L204.6,617.1 L209.3,618.0 L204.5,618.9 L194.8,619.7 L185.9,620.6 L183.1,621.4 L192.0,622.3 L189.5,623.2 L181.1,624.0 L178.6,624.9 L185.8,625.8 L197.2,626.6 L207.4,627.5 L211.3,628.3 L204.5,629.2 L189.3,630.1 L174.8,630.9 L169.7,631.8 L174.5,632.6 L184.8,633.5 L195.8,634.4 L202.4,635.2 L200.1,636.1 L191.4,637.0 L183.9,637.8 L185.4,638.7 L191.0,639.5 L195.4,640.4 L192.9,641.3 L191.2,642.1 L193.8,643.0 L197.3,643.9 L200.1,644.7 L199.3,645.6 L194.0,646.4 L186.2,647.3 L179.4,648.2 L176.9,649.0 L179.0,649.9 L184.2,650.7 L190.8,651.6 L196.4,652.5 L199.1,653.3 L197.2,654.2 L190.7,655.1 L182.8,655.9 L176.9,656.8 L178.3,657.6 L187.7,658.5 L199.6,659.4 L205.5,660.2 L200.0,661.1 L187.7,662.0 L181.5,662.8 L184.1,663.7 L190.0,664.5 L194.8,665.4 L195.7,666.3 L193.5,667.1 L190.7,668.0 L188.8,668.8 L189.7,669.7 L193.1,670.6 L196.4,671.4 L195.7,672.3 L192.1,673.2 L188.8,674.0 L191.5,674.9 L199.6,675.7 L201.3,676.6 L195.8,677.5 L188.6,678.3 L182.9,679.2 L181.5,680.1 L185.3,680.9 L192.0,681.8 L199.2,682.6 L204.3,683.5 L205.4,684.4 L196.4,685.2 L185.6,686.1 L182.6,687.0 L187.7,687.8 L195.1,688.7 L199.5,689.5 L198.1,690.4 L193.4,691.3 L188.0,692.1 L184.8,693.0 L187.2,693.8 L191.5,694.7 L190.1,695.6 L188.8,696.4 L190.5,697.3 L193.8,698.2 L196.7,699.0 L197.5,699.9 L194.5,700.7 L190.1,701.6 L188.3,702.5 L192.7,703.3 L194.8,704.2 L190.7,705.1 L189.5,705.9 L187.0,706.8 L184.3,707.6 L183.7,708.5 L188.6,709.4 L195.0,710.2 L198.6,711.1 L196.8,711.9 L191.9,712.8 L187.5,713.7 L186.6,714.5 L190.6,715.4 L195.4,716.3 L197.5,717.1 L197.0,718.0 L195.6,718.8 L194.1,719.7 L193.0,720.6 L192.8,721.4 L191.3,722.3 L189.0,723.2 L186.9,724.0 L185.9,724.9 L187.1,725.7 L190.7,726.6 L194.9,727.5 L197.5,728.3 L194.2,729.2 L189.9,730.1 L190.5,730.9 L191.5,731.8" fill="none" stroke="#000" stroke-width="1"/></g></svg>
<div class="a" style="left:566px;top:86px;width:14px;height:649px;background:linear-gradient(90deg,#fdfdfd,#f0f0f0);border-left:1px solid #b9b9b9;box-sizing:border-box"></div>
<div class="a" style="left:567px;top:100px;width:13px;height:1px;background:#c0c0c0"></div>
<div class="a" style="left:567px;top:720px;width:13px;height:1px;background:#c0c0c0"></div>
<div class="a" style="left:569px;top:92px;width:0;height:0;border-left:4px solid transparent;border-right:4px solid transparent;border-bottom:4px solid #555"></div>
<div class="a" style="left:569px;top:725px;width:0;height:0;border-left:4px solid transparent;border-right:4px solid transparent;border-top:4px solid #555"></div>
<div class="a" style="left:66px;top:735px;width:499px;height:14px;background:linear-gradient(#fdfdfd,#f0f0f0);border-top:1px solid #b9b9b9;box-sizing:border-box"></div>
<div class="a" style="left:79px;top:736px;width:1px;height:13px;background:#c0c0c0"></div>
<div class="a" style="left:551px;top:736px;width:1px;height:13px;background:#c0c0c0"></div>
<div class="a" style="left:70px;top:738px;width:0;height:0;border-top:4.5px solid transparent;border-bottom:4.5px solid transparent;border-right:5px solid #555"></div>
<div class="a" style="left:556px;top:738px;width:0;height:0;border-top:4.5px solid transparent;border-bottom:4.5px solid transparent;border-left:5px solid #555"></div>
<div class="a" style="left:2px;top:765px;width:592px;height:1px;background:#b9b9b9"></div>
<div class="a" style="left:2px;top:765px;width:252px;height:23px;background:#ebebeb;border:1px solid #b9b9b9;border-radius:0 0 3px 3px;box-sizing:border-box"></div>
<div class="a" style="left:253px;top:765px;width:288px;height:25px;background:linear-gradient(#e6f5ff,#fafdff);border:1px solid #b0b0b0;border-top:none;border-radius:0 0 3px 3px;box-sizing:border-box"></div>
<div class="t" style="left:14px;top:770px;letter-spacing:.08px">Input - Common angle lines [ Angle stack ]</div>
<div class="t" style="left:265px;top:770px;letter-spacing:.03px">Output - Output gather angle stack [ Angle stack ]</div>
<div class="a" style="left:594px;top:0;width:4px;height:792px;background:linear-gradient(90deg,#f0f0f0,#dcdcdc 50%,#8c8c8c)"></div>
<div class="a" style="left:598px;top:0;width:416px;height:790px;background:#484848"></div>
<div class="a" style="left:598px;top:790px;width:416px;height:2px;background:#a9a9a9"></div>
<div class="a" style="left:599px;top:1px;width:413px;height:787px;background:#fff"></div>
<div class="a" style="left:601px;top:32px;width:410px;height:755px;background:#f0f0f0;border-top:1px solid #c6c6c6;border-left:1px solid #dcdcdc;box-sizing:border-box"></div>
<svg class="a" style="left:604px;top:6px" width="22" height="18" viewBox="604 6 22 18">
<path d="M608,17.8 C607.4,13.6 611,10 616.6,9.8 C612.9,10.9 610,13.6 609.5,17.4 Z" fill="#ff6a0a"/>
<path d="M621.9,12.2 C622.5,16.3 618.9,19.9 613.3,20.1 C617,19 619.9,16.3 620.4,12.6 Z" fill="#ff6a0a"/>
<text x="612.9" y="16.4" font-family="Liberation Sans" font-weight="bold" font-size="7.4" fill="#1a6db5">g</text>
</svg>
<div class="t" style="left:628px;top:9px">View properties : Output</div>
<div class="t" style="left:942px;top:7px;font-size:14px;line-height:16px;height:16px">?</div>
<svg class="a" style="left:984px;top:9px" width="12" height="12" viewBox="0 0 12 12"><path d="M1,1 L11,11 M11,1 L1,11" stroke="#000" stroke-width="1.1" fill="none"/></svg>
<div class="hdr" style="top:42px"><svg class="a" style="left:4px;top:5px" width="7" height="8" viewBox="0 0 7 8"><path d="M0,8 L7,8 L7,0 Z" fill="#222"/></svg><div class="t" style="left:15px;top:3px">View properties</div><svg class="a" style="left:351px;top:2px" width="16" height="16" viewBox="0 0 16 16">
<circle cx="8" cy="7.2" r="5.7" fill="none" stroke="#2a6ab8" stroke-width="1" stroke-dasharray="3.2 1"/>
<circle cx="8" cy="7.2" r="3.8" fill="#eef5ff" stroke="#2a6ab8" stroke-width="1" stroke-dasharray="2.6 1"/>
<circle cx="8" cy="7.2" r="2.2" fill="#e8701c"/></svg><svg class="a" style="left:372px;top:0px" width="16" height="16" viewBox="0 0 16 16">
<path d="M2.6,5.8 L7.2,3 L7.2,8.6 Z" fill="#0a4a9c"/>
<path d="M6.5,5.8 L10,5.8 C14.6,5.8 14.6,12.8 10,12.8 L5.4,12.8" fill="none" stroke="#0a4a9c" stroke-width="1.7"/></svg></div>
<div class="tbl" style="top:63px;height:95px"><div class="a" style="left:0;top:0;width:376px;height:18px;background:linear-gradient(#ffffff,#ececec);border-bottom:1px solid #a8a8a8"></div><div class="t" style="left:2px;top:3px">Name</div><div class="a" style="left:190px;top:0;width:1px;height:18px;background:#c8c8c8"></div><div class="t" style="left:193px;top:3px">Value</div><div class="row" style="top:19px"><div class="n gray">Axes</div><div class="vd">Normal</div><svg class="dd" width="7" height="4" viewBox="0 0 7 4" shape-rendering="crispEdges"><path d="M0,0 L7,0 L3.5,4 Z" fill="#000"/></svg></div><div class="row g" style="top:39px"><div class="n">Horizontal axis orientation</div><div class="vd">Increasing</div><svg class="dd" width="7" height="4" viewBox="0 0 7 4" shape-rendering="crispEdges"><path d="M0,0 L7,0 L3.5,4 Z" fill="#000"/></svg></div><div class="row" style="top:59px"><div class="n">Vertical axis orientation</div><div class="vd">Decreasing</div><svg class="dd" width="7" height="4" viewBox="0 0 7 4" shape-rendering="crispEdges"><path d="M0,0 L7,0 L3.5,4 Z" fill="#000"/></svg></div><div class="row g" style="top:79px"><div class="n">Hide horizontal annotation</div><div class="cb"></div></div><div class="a" style="left:376px;top:0px;width:14px;height:95px;background:linear-gradient(90deg,#ffffff,#f0f0f0);border-left:1px solid #b4b4b4;box-sizing:border-box"></div><div class="a" style="left:377px;top:40px;width:13px;height:42px;background:#e1e1e1;border-top:1px solid #b4b4b4;border-bottom:1px solid #b4b4b4;box-sizing:border-box"></div><div class="a" style="left:377px;top:13px;width:13px;height:1px;background:#b4b4b4"></div><div class="a" style="left:377px;top:81px;width:13px;height:1px;background:#b4b4b4"></div><div class="a" style="left:379px;top:4px;width:0;height:0;border-left:4px solid transparent;border-right:4px solid transparent;border-bottom:4px solid #555"></div><div class="a" style="left:379px;top:86px;width:0;height:0;border-left:4px solid transparent;border-right:4px solid transparent;border-top:4px solid #555"></div></div>
<div class="hdr" style="top:166px"><svg class="a" style="left:4px;top:5px" width="7" height="8" viewBox="0 0 7 8"><path d="M0,8 L7,8 L7,0 Z" fill="#222"/></svg><div class="t" style="left:15px;top:3px">Vista items</div><svg class="a" style="left:285px;top:0" width="104" height="18" viewBox="896 167 104 18">
<path d="M903.6,174.8 L906.4,178.3 L910.8,172.6" fill="none" stroke="#0a4a9c" stroke-width="1.7"/>
<g fill="none" stroke="#666" stroke-width="1"><ellipse cx="926" cy="172" rx="3.6" ry="1.5"/><path d="M922.4,172 L922.4,179.3 C922.4,181 929.6,181 929.6,179.3 L929.6,172 M922.4,174.6 C922.4,176.2 929.6,176.2 929.6,174.6 M922.4,177 C922.4,178.6 929.6,178.6 929.6,177"/></g>
<rect x="927.3" y="175" width="6.6" height="6.6" fill="#333"/><rect x="928.8" y="175" width="3" height="2" fill="#e8e8e8"/>
<path d="M949,170.6 L952.4,174.8 L950.5,174.8 L950.5,178.4 L947.5,178.4 L947.5,174.8 L945.6,174.8 Z" fill="#0a4a9c"/>
<rect x="943.3" y="180" width="1.5" height="2" fill="#222"/><rect x="945.8" y="180" width="9.2" height="2" fill="#222"/>
<rect x="964.2" y="170" width="1.5" height="2" fill="#222"/><rect x="966.7" y="170" width="9.2" height="2" fill="#222"/>
<path d="M970,181.6 L973.4,177.3 L971.5,177.3 L971.5,173.4 L968.5,173.4 L968.5,177.3 L966.6,177.3 Z" fill="#0a4a9c"/>
<path d="M985.4,170.4 C987,171 987,173 988.5,173.6 L990.5,175" fill="none" stroke="#444" stroke-width="1"/>
<g transform="translate(993.2,178) rotate(-38)"><ellipse rx="3.3" ry="4.6" fill="none" stroke="#444" stroke-width="1"/><path d="M-3.3,-1 L3.3,-1 M0,-4.6 L0,-1" stroke="#444" stroke-width="0.9" fill="none"/></g>
</svg></div>
<div class="tbl" style="top:187px;height:174px"><div class="a" style="left:0;top:0;width:390px;height:18px;background:linear-gradient(#ffffff,#ececec);border-bottom:1px solid #a8a8a8"></div><div class="t" style="left:2px;top:3px">Item name</div><div class="a" style="left:244px;top:0;width:1px;height:18px;background:#c8c8c8"></div><div class="t" style="left:248px;top:3px">Module name</div><div class="a" style="left:341px;top:0;width:1px;height:18px;background:#c8c8c8"></div><div class="t" style="left:344px;top:3px;letter-spacing:-.35px">PlaceHol</div><div class="a" style="left:0;top:64px;width:390px;height:15px;background:#f0f0f0"></div><div class="a" style="left:6px;top:24px;width:0;height:0;border-left:4px solid transparent;border-right:4px solid transparent;border-top:4px solid #606060"></div><div class="t" style="left:23px;top:20px">Vista Items</div><div class="a" style="left:26px;top:39px;width:0;height:0;border-left:4px solid transparent;border-right:4px solid transparent;border-top:4px solid #606060"></div><div class="t" style="left:43px;top:35px">Layer <span style="margin-left:2px">#1</span></div><div class="a" style="left:46px;top:54px;width:0;height:0;border-left:4px solid transparent;border-right:4px solid transparent;border-top:4px solid #606060"></div><div class="cb" style="left:63px;top:49px;width:12px;height:12px"><svg class="a" style="left:1px;top:1px" width="11" height="11" viewBox="0 0 11 11"><path d="M1.4,4.8 L4.2,9.2 L8.6,1.4" stroke="#000" stroke-width="1.7" stroke-linecap="round" stroke-linejoin="round" fill="none"/></svg></div><div class="t" style="left:84px;top:50px">Output gather angle stack</div><div class="t" style="left:248px;top:50px">Angle stack</div><div class="cb" style="left:83px;top:64px;width:12px;height:12px"><svg class="a" style="left:1px;top:1px" width="11" height="11" viewBox="0 0 11 11"><path d="M1.4,4.8 L4.2,9.2 L8.6,1.4" stroke="#000" stroke-width="1.7" stroke-linecap="round" stroke-linejoin="round" fill="none"/></svg></div><div class="t" style="left:103px;top:65px">Base stack</div><div class="a" style="left:0;top:160px;width:390px;height:14px;background:linear-gradient(#ffffff,#f0f0f0);border-top:1px solid #b4b4b4;box-sizing:border-box"></div><div class="a" style="left:13px;top:161px;width:1px;height:13px;background:#b4b4b4"></div><div class="a" style="left:376px;top:161px;width:1px;height:13px;background:#b4b4b4"></div><div class="a" style="left:289px;top:161px;width:87px;height:13px;background:#e1e1e1;border-left:1px solid #b4b4b4;box-sizing:border-box"></div><div class="a" style="left:4px;top:163px;width:0;height:0;border-top:4px solid transparent;border-bottom:4px solid transparent;border-right:4px solid #555"></div><div class="a" style="left:381px;top:163px;width:0;height:0;border-top:4px solid transparent;border-bottom:4px solid transparent;border-left:4px solid #555"></div></div>
<div class="hdr" style="top:369px"><svg class="a" style="left:4px;top:5px" width="7" height="8" viewBox="0 0 7 8"><path d="M0,8 L7,8 L7,0 Z" fill="#222"/></svg><div class="t" style="left:15px;top:3px">Vista item properties</div><svg class="a" style="left:351px;top:2px" width="16" height="16" viewBox="0 0 16 16">
<circle cx="8" cy="7.2" r="5.7" fill="none" stroke="#2a6ab8" stroke-width="1" stroke-dasharray="3.2 1"/>
<circle cx="8" cy="7.2" r="3.8" fill="#eef5ff" stroke="#2a6ab8" stroke-width="1" stroke-dasharray="2.6 1"/>
<circle cx="8" cy="7.2" r="2.2" fill="#e8701c"/></svg><svg class="a" style="left:372px;top:0px" width="16" height="16" viewBox="0 0 16 16">
<path d="M2.6,5.8 L7.2,3 L7.2,8.6 Z" fill="#0a4a9c"/>
<path d="M6.5,5.8 L10,5.8 C14.6,5.8 14.6,12.8 10,12.8 L5.4,12.8" fill="none" stroke="#0a4a9c" stroke-width="1.7"/></svg></div>
<div class="tbl" style="top:390px;height:386px"><div class="a" style="left:0;top:0;width:376px;height:18px;background:linear-gradient(#ffffff,#ececec);border-bottom:1px solid #a8a8a8"></div><div class="t" style="left:2px;top:3px">Name</div><div class="a" style="left:190px;top:0;width:1px;height:18px;background:#c8c8c8"></div><div class="t" style="left:193px;top:3px">Value</div><div class="row" style="top:19px"><div class="n"><span style="letter-spacing:-.3px">Transparency level</span></div><div class="v">255</div></div><div class="row g" style="top:39px"><div class="n">Color bar</div><div class="a" style="left:196px;top:4px;width:30px;height:12px;background:linear-gradient(90deg,#0000ff 0%,#2020ff 12%,#ffffff 50%,#ff2020 88%,#ff0000 100%)"></div><div class="a" style="left:229px;top:4px;line-height:14px">Stack</div></div><div class="row" style="top:59px"><div class="n">Inverted palette</div><div class="cb"></div></div><div class="row g" style="top:79px"><div class="n">Normalization</div><div class="vd">Seismic</div><svg class="dd" width="7" height="4" viewBox="0 0 7 4" shape-rendering="crispEdges"><path d="M0,0 L7,0 L3.5,4 Z" fill="#000"/></svg></div><div class="row" style="top:99px"><div class="n">Min range value</div><div class="v gray">-1.526953697</div></div><div class="row g" style="top:119px"><div class="n">Max range value</div><div class="v gray">1.526953697</div></div><div class="row" style="top:139px"><div class="n">Hide out of range</div><div class="cb dis"></div></div><div class="row g" style="top:159px"><div class="n">Gain</div><div class="v">1</div></div><div class="row" style="top:179px"><div class="n">AGC &lt;ms&gt;</div><div class="v">0</div></div><div class="row g" style="top:199px"><div class="n">Show interpolated values</div><div class="cb"></div></div><div class="row" style="top:219px"><div class="n">Density</div><div class="cb"></div></div><div class="row g sel" style="top:239px"><div class="n">Wiggle</div><div class="cb"><svg class="a" style="left:1px;top:1px" width="11" height="11" viewBox="0 0 11 11"><path d="M1.4,4.8 L4.2,9.2 L8.6,1.4" stroke="#000" stroke-width="1.7" stroke-linecap="round" stroke-linejoin="round" fill="none"/></svg></div></div><div class="row" style="top:259px"><div class="n">Wiggle positive color</div><div class="a" style="left:190px;top:0;width:186px;height:20px;background:#fff;border-bottom:1px solid #dcdcdc;box-sizing:border-box"></div><div class="a" style="left:191.5px;top:1px;width:21px;height:17px;background:#000;border-right:1px solid #6e6e6e;border-bottom:1px solid #6e6e6e"></div><div class="a" style="left:217.5px;top:3px;line-height:14px;white-space:pre;letter-spacing:-.25px">(0; 0; 0)</div><div class="a" style="left:357px;top:0;width:19px;height:19px;border:1px solid #b2b2b2;border-radius:3px;background:#f2f2f2;box-sizing:border-box"></div><svg class="a" style="left:358px;top:1px" width="17" height="17" viewBox="0 0 17 17"><circle cx="8.3" cy="8.6" r="7.5" fill="#e8701c"/><rect x="4" y="7.5" width="8.7" height="2.2" rx="0.8" fill="#fff"/></svg></div><div class="row g" style="top:279px"><div class="n">Wiggle line color</div><div class="a" style="left:190px;top:0;width:186px;height:20px;background:#fff;border-bottom:1px solid #dcdcdc;box-sizing:border-box"></div><div class="a" style="left:191.5px;top:1px;width:21px;height:17px;background:#000;border-right:1px solid #6e6e6e;border-bottom:1px solid #6e6e6e"></div><div class="a" style="left:217.5px;top:3px;line-height:14px;white-space:pre;letter-spacing:-.25px">(0; 0; 0)</div><div class="a" style="left:357px;top:0;width:19px;height:19px;border:1px solid #b2b2b2;border-radius:3px;background:#f2f2f2;box-sizing:border-box"></div><svg class="a" style="left:358px;top:1px" width="17" height="17" viewBox="0 0 17 17"><circle cx="8.3" cy="8.6" r="7.5" fill="#e8701c"/><rect x="4" y="7.5" width="8.7" height="2.2" rx="0.8" fill="#fff"/></svg></div><div class="row" style="top:299px"><div class="n">Wiggle line width</div><div class="v">1</div></div><div class="row g" style="top:319px"><div class="n">Wiggle line antialiased</div><div class="cb"></div></div><div class="row" style="top:339px"><div class="n">Wiggle clipping</div><div class="v">10</div></div><div class="row g" style="top:359px"><div class="n">Wiggle positive on right</div><div class="cb"><svg class="a" style="left:1px;top:1px" width="11" height="11" viewBox="0 0 11 11"><path d="M1.4,4.8 L4.2,9.2 L8.6,1.4" stroke="#000" stroke-width="1.7" stroke-linecap="round" stroke-linejoin="round" fill="none"/></svg></div></div><div class="row" style="top:379px"><div class="n">Positive wiggle transparency</div><div class="cb"></div></div><div class="a" style="left:376px;top:0px;width:14px;height:386px;background:linear-gradient(90deg,#ffffff,#f0f0f0);border-left:1px solid #b4b4b4;box-sizing:border-box"></div><div class="a" style="left:377px;top:282px;width:13px;height:91px;background:#e1e1e1;border-top:1px solid #b4b4b4;border-bottom:1px solid #b4b4b4;box-sizing:border-box"></div><div class="a" style="left:377px;top:13px;width:13px;height:1px;background:#b4b4b4"></div><div class="a" style="left:377px;top:372px;width:13px;height:1px;background:#b4b4b4"></div><div class="a" style="left:379px;top:4px;width:0;height:0;border-left:4px solid transparent;border-right:4px solid transparent;border-bottom:4px solid #555"></div><div class="a" style="left:379px;top:377px;width:0;height:0;border-left:4px solid transparent;border-right:4px solid transparent;border-top:4px solid #555"></div></div>
</body></html>
